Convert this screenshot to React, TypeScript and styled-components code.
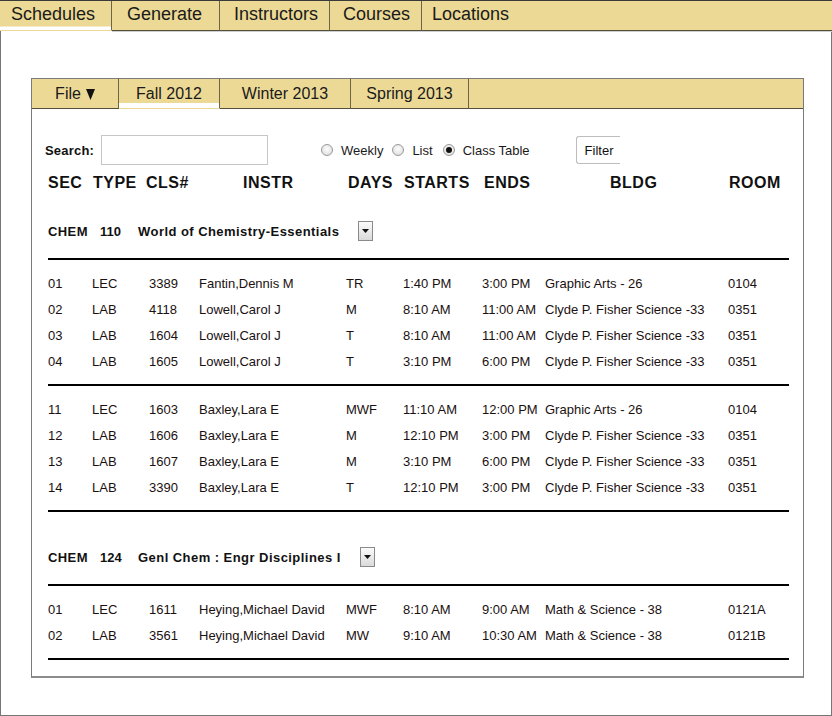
import React from "react";
import styled, { createGlobalStyle } from "styled-components";

const GlobalStyle = createGlobalStyle`
  html, body { margin: 0; padding: 0; background: #fff; }
  body { font-family: "Liberation Sans", Arial, Helvetica, sans-serif; color: #111; }
  * { box-sizing: border-box; }
`;

const TAN = "#ECD996";

const Page = styled.div`
  width: 832px;
  height: 716px;
  border: 1px solid #767676;
  border-top: none;
  display: flex;
  flex-direction: column;
  background: #fff;
`;

const TopNav = styled.nav`
  display: flex;
  border-top: 1px solid #3a3a3a;
  margin: 0 -1px;
`;

const TopTab = styled.div<{ $w?: number; $pl: number; $active?: boolean; $last?: boolean }>`
  ${(p) => (p.$w ? `width: ${p.$w}px;` : "flex: 1;")}
  height: 30px;
  padding-left: ${(p) => p.$pl}px;
  font-size: 18px;
  line-height: 27px;
  color: #1a1a1a;
  background: ${(p) =>
    p.$active ? `linear-gradient(${TAN} 0 25px, #f4ebc6 25px 26px, #fff 26px)` : TAN};
  border-right: ${(p) => (p.$last ? "none" : "1px solid #6e6548")};
  border-bottom: ${(p) => (p.$active ? "1px solid transparent" : "1px solid #55503c")};
  box-shadow: ${(p) => (p.$active ? "none" : "0 1px 0 #cfcfcf")};
  white-space: nowrap;
`;

const Body = styled.div`
  padding: 47px 27px 0 30px;
`;

const Panel = styled.section`
  width: 773px;
  border: 1px solid #7a7a7a;
  border-bottom: 2px solid #8c8c8c;
  background: #fff;
`;

const PanelTabs = styled.div`
  display: flex;
`;

const PanelTab = styled.div<{ $w?: number; $active?: boolean; $last?: boolean }>`
  ${(p) => (p.$w ? `width: ${p.$w}px;` : "flex: 1;")}
  height: 30px;
  font-size: 16px;
  line-height: 29px;
  text-align: center;
  color: #1a1a1a;
  background: ${(p) =>
    p.$active ? `linear-gradient(${TAN} 0 24px, #fff 24px)` : TAN};
  border-right: ${(p) => (p.$last ? "none" : "1px solid #6e6548")};
  border-bottom: ${(p) => (p.$active ? "1px solid transparent" : "1px solid #55503c")};
  white-space: nowrap;
  display: flex;
  justify-content: center;
  align-items: flex-start;
  gap: 5px;
`;

const Caret = styled.svg`
  margin-top: 10px;
`;

const Content = styled.div`
  padding: 26px 14px 16px 16px;
`;

const SearchRow = styled.div`
  display: flex;
  align-items: center;
  margin-left: -3px;
  height: 30px;
`;

const Label = styled.label`
  width: 50px;
  font-size: 13px;
  font-weight: bold;
  letter-spacing: 0.2px;
  margin-right: 6px;
`;

const SearchInput = styled.input`
  width: 167px;
  height: 30px;
  border: 1px solid #c6c6c6;
  margin: 0 53px 0 0;
  padding: 0 4px;
  font: 13px "Liberation Sans", Arial, sans-serif;
  outline: none;
`;

const RadioOption = styled.span<{ $mr: number }>`
  display: inline-flex;
  align-items: center;
  gap: 8px;
  font-size: 13px;
  margin-right: ${(p) => p.$mr}px;
  color: #1a1a1a;
`;

const RadioDot = styled.span<{ $checked?: boolean }>`
  width: 12px;
  height: 12px;
  border-radius: 50%;
  border: 1px solid #9a9a9a;
  background: radial-gradient(circle at 50% 40%, #fdfdfd, #d8d8d8);
  display: inline-flex;
  align-items: center;
  justify-content: center;
  &::after {
    content: "";
    width: 6px;
    height: 6px;
    border-radius: 50%;
    background: ${(p) => (p.$checked ? "#111" : "transparent")};
  }
`;

const FilterButton = styled.button`
  margin-left: 46px;
  width: 44px;
  height: 28px;
  border: 1px solid #bdbdbd;
  border-right: none;
  border-radius: 3px 0 0 3px;
  background: #fff;
  font: 13px "Liberation Sans", Arial, sans-serif;
  color: #111;
  text-align: left;
  padding: 0 0 0 8px;
`;

const HeaderRow = styled.div`
  display: grid;
  grid-template-columns: 45px 53px 97px 105px 56px 80px 126px 119px 1fr;
  height: 20px;
  margin-top: 8px;
  font-size: 16px;
  letter-spacing: 0.5px;
  font-weight: bold;
  line-height: 20px;
  white-space: nowrap;
`;

const Course = styled.div`
  padding-top: 28px;
  & + & {
    padding-top: 35px;
  }
`;

const CourseHeader = styled.div`
  display: flex;
  align-items: center;
  height: 39px;
  padding-bottom: 17px;
  border-bottom: 2px solid #000;
  font-size: 13px;
  font-weight: bold;
  white-space: nowrap;
`;

const Subject = styled.span`
  width: 52px;
  letter-spacing: 0.4px;
`;

const Number = styled.span`
  width: 38px;
`;

const Title = styled.span`
  margin-right: 19px;
  letter-spacing: 0.45px;
`;

const SelectBox = styled.span`
  width: 15px;
  height: 20px;
  border: 1px solid #8a8a8a;
  background: linear-gradient(#fbfbfb, #dadada);
  display: inline-flex;
  align-items: center;
  justify-content: center;
`;

const Group = styled.div`
  padding: 10px 0;
  border-bottom: 2px solid #000;
`;

const Row = styled.div`
  display: grid;
  grid-template-columns: 44px 57px 50px 147px 57px 79px 63px 183px 1fr;
  height: 26px;
  padding-top: 2px;
  line-height: 24px;
  font-size: 13px;
  white-space: nowrap;
  color: #1a1010;
`;

type Sec = [string, string, string, string, string, string, string, string, string];

const course1: Sec[][] = [
  [
    ["01", "LEC", "3389", "Fantin,Dennis M", "TR", "1:40 PM", "3:00 PM", "Graphic Arts - 26", "0104"],
    ["02", "LAB", "4118", "Lowell,Carol J", "M", "8:10 AM", "11:00 AM", "Clyde P. Fisher Science -33", "0351"],
    ["03", "LAB", "1604", "Lowell,Carol J", "T", "8:10 AM", "11:00 AM", "Clyde P. Fisher Science -33", "0351"],
    ["04", "LAB", "1605", "Lowell,Carol J", "T", "3:10 PM", "6:00 PM", "Clyde P. Fisher Science -33", "0351"],
  ],
  [
    ["11", "LEC", "1603", "Baxley,Lara E", "MWF", "11:10 AM", "12:00 PM", "Graphic Arts - 26", "0104"],
    ["12", "LAB", "1606", "Baxley,Lara E", "M", "12:10 PM", "3:00 PM", "Clyde P. Fisher Science -33", "0351"],
    ["13", "LAB", "1607", "Baxley,Lara E", "M", "3:10 PM", "6:00 PM", "Clyde P. Fisher Science -33", "0351"],
    ["14", "LAB", "3390", "Baxley,Lara E", "T", "12:10 PM", "3:00 PM", "Clyde P. Fisher Science -33", "0351"],
  ],
];

const course2: Sec[][] = [
  [
    ["01", "LEC", "1611", "Heying,Michael David", "MWF", "8:10 AM", "9:00 AM", "Math & Science - 38", "0121A"],
    ["02", "LAB", "3561", "Heying,Michael David", "MW", "9:10 AM", "10:30 AM", "Math & Science - 38", "0121B"],
  ],
];

const courses = [
  { subject: "CHEM", num: "110", title: "World of Chemistry-Essentials", groups: course1 },
  { subject: "CHEM", num: "124", title: "Genl Chem : Engr Disciplines I", groups: course2 },
];

const headers = ["SEC", "TYPE", "CLS#", "INSTR", "DAYS", "STARTS", "ENDS", "BLDG", "ROOM"];

const SmallTriangle = () => (
  <svg width="7" height="4" viewBox="0 0 7 4">
    <polygon points="0,0 7,0 3.5,4" fill="#111" />
  </svg>
);

export default function App() {
  return (
    <>
      <GlobalStyle />
      <Page>
        <TopNav>
          <TopTab $w={112} $pl={11} $active>Schedules</TopTab>
          <TopTab $w={108} $pl={15}>Generate</TopTab>
          <TopTab $w={110} $pl={14}>Instructors</TopTab>
          <TopTab $w={92} $pl={13}>Courses</TopTab>
          <TopTab $pl={10} $last>Locations</TopTab>
        </TopNav>
        <Body>
          <Panel>
            <PanelTabs>
              <PanelTab $w={87}>
                File
                <Caret width="9" height="11" viewBox="0 0 9 11">
                  <polygon points="0,0 9,0 4.5,11" fill="#111" />
                </Caret>
              </PanelTab>
              <PanelTab $w={101} $active>Fall 2012</PanelTab>
              <PanelTab $w={131}>Winter 2013</PanelTab>
              <PanelTab $w={118}>Spring 2013</PanelTab>
              <PanelTab $last />
            </PanelTabs>
            <Content>
              <SearchRow>
                <Label>Search:</Label>
                <SearchInput type="text" />
                <RadioOption $mr={9}><RadioDot />Weekly</RadioOption>
                <RadioOption $mr={10}><RadioDot />List</RadioOption>
                <RadioOption $mr={0}><RadioDot $checked />Class Table</RadioOption>
                <FilterButton>Filter</FilterButton>
              </SearchRow>
              <HeaderRow>
                {headers.map((h) => (
                  <span key={h}>{h}</span>
                ))}
              </HeaderRow>
              {courses.map((c) => (
                <Course key={c.num}>
                  <CourseHeader>
                    <Subject>{c.subject}</Subject>
                    <Number>{c.num}</Number>
                    <Title>{c.title}</Title>
                    <SelectBox>
                      <SmallTriangle />
                    </SelectBox>
                  </CourseHeader>
                  {c.groups.map((g, gi) => (
                    <Group key={gi}>
                      {g.map((r, ri) => (
                        <Row key={ri}>
                          {r.map((cell, ci) => (
                            <span key={ci}>{cell}</span>
                          ))}
                        </Row>
                      ))}
                    </Group>
                  ))}
                </Course>
              ))}
            </Content>
          </Panel>
        </Body>
      </Page>
    </>
  );
}
